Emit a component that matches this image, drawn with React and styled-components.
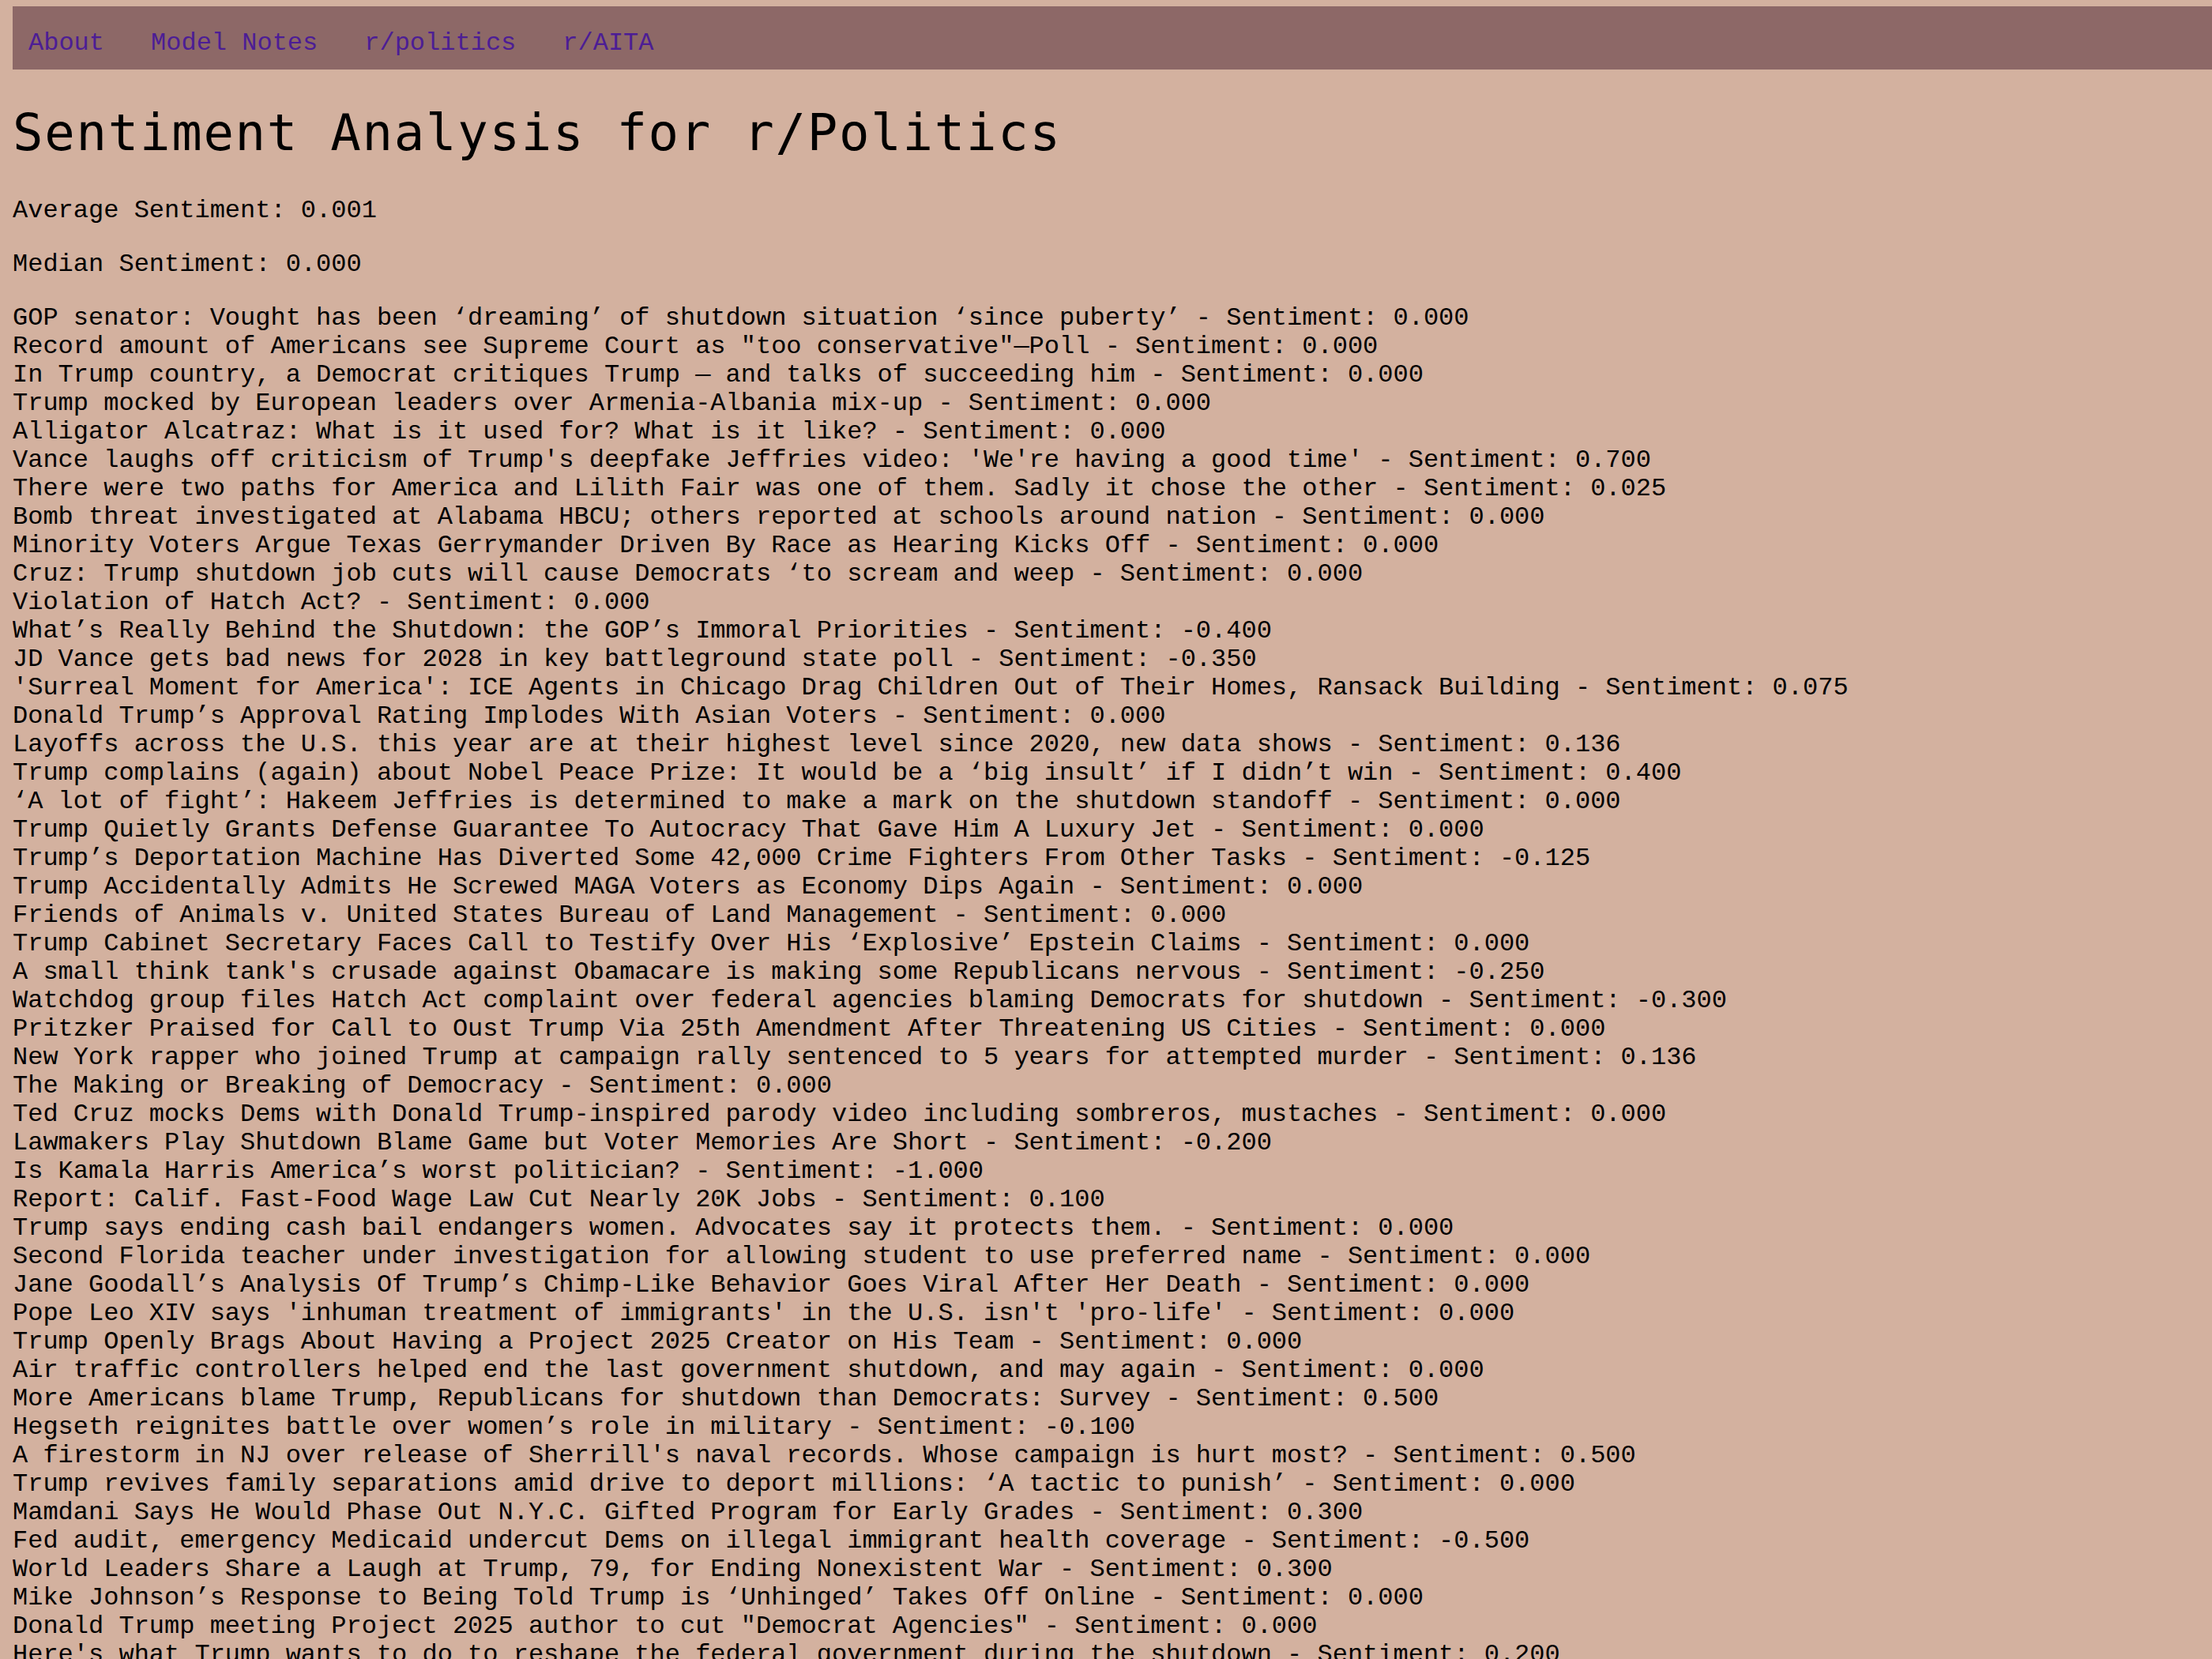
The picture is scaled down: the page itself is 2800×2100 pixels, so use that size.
import React from 'react';
import styled, { createGlobalStyle } from 'styled-components';

const GlobalStyle = createGlobalStyle`
  html, body {
    background: #d3b19f;
  }
  body {
    margin: 8px 0 0 16px;
    color: #000;
    font-family: "Liberation Mono", "DejaVu Sans Mono", monospace;
    font-size: 32px;
  }
`;

const NavBar = styled.nav`
  display: flex;
  align-items: flex-start;
  gap: 19px;
  height: 80px;
  box-sizing: border-box;
  padding-top: 29px;
  background: #8d6867;
`;

const NavLink = styled.a`
  padding: 0 20px;
  color: #4c1d95;
  text-decoration: none;
  font-family: "Liberation Mono", monospace;
  font-size: 32px;
  line-height: 36px;
  white-space: nowrap;
`;

const Title = styled.h1`
  margin: 43px 0 44px;
  font-family: "DejaVu Sans Mono", monospace;
  font-size: 64px;
  font-weight: 400;
  line-height: 74px;
  letter-spacing: 1.7px;
  white-space: nowrap;
`;

const Stat = styled.p`
  margin: 0 0 32px;
  line-height: 36px;
  white-space: pre;
`;

const PostList = styled.div`
  display: flex;
  flex-direction: column;
`;

const PostRow = styled.div`
  line-height: 36px;
  white-space: pre;
`;

const posts = [
  ['GOP senator: Vought has been ‘dreaming’ of shutdown situation ‘since puberty’', '0.000'],
  ['Record amount of Americans see Supreme Court as "too conservative"—Poll', '0.000'],
  ['In Trump country, a Democrat critiques Trump — and talks of succeeding him', '0.000'],
  ['Trump mocked by European leaders over Armenia-Albania mix-up', '0.000'],
  ['Alligator Alcatraz: What is it used for? What is it like?', '0.000'],
  ["Vance laughs off criticism of Trump's deepfake Jeffries video: 'We're having a good time'", '0.700'],
  ['There were two paths for America and Lilith Fair was one of them. Sadly it chose the other', '0.025'],
  ['Bomb threat investigated at Alabama HBCU; others reported at schools around nation', '0.000'],
  ['Minority Voters Argue Texas Gerrymander Driven By Race as Hearing Kicks Off', '0.000'],
  ['Cruz: Trump shutdown job cuts will cause Democrats ‘to scream and weep', '0.000'],
  ['Violation of Hatch Act?', '0.000'],
  ['What’s Really Behind the Shutdown: the GOP’s Immoral Priorities', '-0.400'],
  ['JD Vance gets bad news for 2028 in key battleground state poll', '-0.350'],
  ["'Surreal Moment for America': ICE Agents in Chicago Drag Children Out of Their Homes, Ransack Building", '0.075'],
  ['Donald Trump’s Approval Rating Implodes With Asian Voters', '0.000'],
  ['Layoffs across the U.S. this year are at their highest level since 2020, new data shows', '0.136'],
  ['Trump complains (again) about Nobel Peace Prize: It would be a ‘big insult’ if I didn’t win', '0.400'],
  ['‘A lot of fight’: Hakeem Jeffries is determined to make a mark on the shutdown standoff', '0.000'],
  ['Trump Quietly Grants Defense Guarantee To Autocracy That Gave Him A Luxury Jet', '0.000'],
  ['Trump’s Deportation Machine Has Diverted Some 42,000 Crime Fighters From Other Tasks', '-0.125'],
  ['Trump Accidentally Admits He Screwed MAGA Voters as Economy Dips Again', '0.000'],
  ['Friends of Animals v. United States Bureau of Land Management', '0.000'],
  ['Trump Cabinet Secretary Faces Call to Testify Over His ‘Explosive’ Epstein Claims', '0.000'],
  ["A small think tank's crusade against Obamacare is making some Republicans nervous", '-0.250'],
  ['Watchdog group files Hatch Act complaint over federal agencies blaming Democrats for shutdown', '-0.300'],
  ['Pritzker Praised for Call to Oust Trump Via 25th Amendment After Threatening US Cities', '0.000'],
  ['New York rapper who joined Trump at campaign rally sentenced to 5 years for attempted murder', '0.136'],
  ['The Making or Breaking of Democracy', '0.000'],
  ['Ted Cruz mocks Dems with Donald Trump-inspired parody video including sombreros, mustaches', '0.000'],
  ['Lawmakers Play Shutdown Blame Game but Voter Memories Are Short', '-0.200'],
  ['Is Kamala Harris America’s worst politician?', '-1.000'],
  ['Report: Calif. Fast-Food Wage Law Cut Nearly 20K Jobs', '0.100'],
  ['Trump says ending cash bail endangers women. Advocates say it protects them.', '0.000'],
  ['Second Florida teacher under investigation for allowing student to use preferred name', '0.000'],
  ['Jane Goodall’s Analysis Of Trump’s Chimp-Like Behavior Goes Viral After Her Death', '0.000'],
  ["Pope Leo XIV says 'inhuman treatment of immigrants' in the U.S. isn't 'pro-life'", '0.000'],
  ['Trump Openly Brags About Having a Project 2025 Creator on His Team', '0.000'],
  ['Air traffic controllers helped end the last government shutdown, and may again', '0.000'],
  ['More Americans blame Trump, Republicans for shutdown than Democrats: Survey', '0.500'],
  ['Hegseth reignites battle over women’s role in military', '-0.100'],
  ["A firestorm in NJ over release of Sherrill's naval records. Whose campaign is hurt most?", '0.500'],
  ['Trump revives family separations amid drive to deport millions: ‘A tactic to punish’', '0.000'],
  ['Mamdani Says He Would Phase Out N.Y.C. Gifted Program for Early Grades', '0.300'],
  ['Fed audit, emergency Medicaid undercut Dems on illegal immigrant health coverage', '-0.500'],
  ['World Leaders Share a Laugh at Trump, 79, for Ending Nonexistent War', '0.300'],
  ['Mike Johnson’s Response to Being Told Trump is ‘Unhinged’ Takes Off Online', '0.000'],
  ['Donald Trump meeting Project 2025 author to cut "Democrat Agencies"', '0.000'],
  ["Here's what Trump wants to do to reshape the federal government during the shutdown", '0.200'],
];

export default function App() {
  return (
    <>
      <GlobalStyle />
      <NavBar>
        <NavLink href="#about">About</NavLink>
        <NavLink href="#notes">Model Notes</NavLink>
        <NavLink href="#politics">r/politics</NavLink>
        <NavLink href="#aita">r/AITA</NavLink>
      </NavBar>
      <Title>Sentiment Analysis for r/Politics</Title>
      <Stat>Average Sentiment: 0.001</Stat>
      <Stat>Median Sentiment: 0.000</Stat>
      <PostList>
        {posts.map(([title, score], i) => (
          <PostRow key={i}>{title} - Sentiment: {score}</PostRow>
        ))}
      </PostList>
    </>
  );
}
